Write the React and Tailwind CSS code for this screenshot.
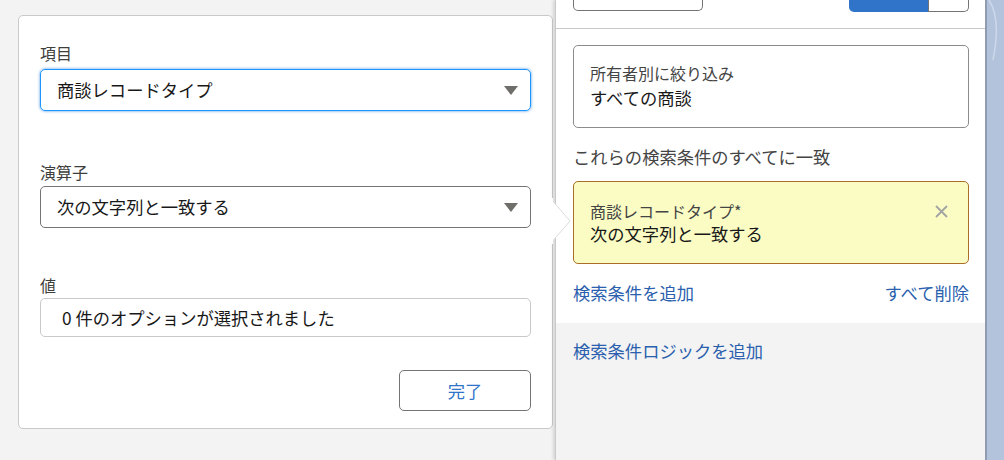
import React from "react"

const font = { fontFamily: '"Noto Sans CJK JP", "Noto Sans", sans-serif' }

function Caret() {
    return (
        <svg width="14" height="9" viewBox="0 0 14 9" className="shrink-0">
            <polygon points="0,0 14,0 7,9" fill="#706e6b" />
        </svg>
    )
}

function FilterEditor() {
    return (
        <div className="w-[535px] h-[414px] shrink-0 bg-white border border-[#c9c9c9] rounded-[5px] pt-[27px] px-[21px] flex flex-col">
            {/* 項目 */}
            <div className="h-[20px] leading-[20px] text-[16px] text-[#3e3e3c]">項目</div>
            <div className="mt-[6px] h-[42px] flex items-center justify-between pl-[16px] pr-[12px] border border-[#1b96ff] rounded-[5px] shadow-[0_0_3px_#4a90e2]">
                <span className="text-[17.3px] text-[#181818]">商談レコードタイプ</span>
                <Caret />
            </div>
            {/* 演算子 */}
            <div className="mt-[51px] h-[20px] leading-[20px] text-[16px] text-[#3e3e3c]">演算子</div>
            <div className="mt-[4px] h-[42px] flex items-center justify-between pl-[16px] pr-[12px] border border-[#747474] rounded-[5px]">
                <span className="text-[17.3px] text-[#181818]">次の文字列と一致する</span>
                <Caret />
            </div>
            {/* 値 */}
            <div className="mt-[47px] h-[20px] leading-[20px] text-[16px] text-[#3e3e3c]">値</div>
            <div className="mt-[3px] h-[39px] flex items-center pl-[21px] border border-[#c9c9c9] rounded-[5px]">
                <span className="text-[17.3px] text-[#181818]">0 件のオプションが選択されました</span>
            </div>
            <div className="mt-[33px] flex justify-end">
                <button className="w-[132px] h-[41px] border border-[#747474] rounded-[5px] text-[17.3px] text-[#2f74c9] bg-white">
                    完了
                </button>
            </div>
        </div>
    )
}

function FilterPanel() {
    return (
        <div className="w-[430px] shrink-0 h-full flex flex-col bg-[#f3f3f3] border-l border-[#c9c9c9] shadow-[-2px_0_3px_rgba(0,0,0,0.12)]">
            <div className="bg-white">
                {/* top buttons (cut off) */}
                <div className="h-[29px] border-b border-[#c9c9c9] pl-[17px] pr-[16px] flex justify-between items-start">
                    <div className="w-[130px] h-[11px] border border-t-0 border-[#747474] rounded-b-[5px]" />
                    <div className="flex">
                        <div className="w-[79px] h-[12px] bg-[#3074c9] rounded-bl-[5px]" />
                        <div className="w-[41px] h-[12px] border border-t-0 border-[#747474] rounded-br-[5px]" />
                    </div>
                </div>
                <div className="pl-[17px] pr-[16px] pt-[16px] pb-[18px] flex flex-col">
                    <div className="h-[83px] border border-[#8c8c8c] rounded-[5px] pl-[16px] pt-[17px]">
                        <div className="h-[20px] leading-[20px] text-[16px] text-[#444444]">所有者別に絞り込み</div>
                        <div className="mt-[3px] h-[24px] leading-[24px] text-[17.3px] text-[#181818]">すべての商談</div>
                    </div>
                    <div className="mt-[17px] h-[24px] leading-[24px] text-[17.3px] text-[#444444]">
                        これらの検索条件のすべてに一致
                    </div>
                    <div className="mt-[12px] h-[83px] bg-[#fafcc4] border border-[#a96e28] rounded-[5px] pl-[16px] pr-[20px] pt-[19px] flex justify-between items-start">
                        <div>
                            <div className="h-[20px] leading-[20px] text-[16px] text-[#444444]">商談レコードタイプ*</div>
                            <div className="mt-[1px] h-[24px] leading-[24px] text-[17.3px] text-[#181818]">次の文字列と一致する</div>
                        </div>
                        <svg width="13" height="13" viewBox="0 0 13 13" className="mt-[4px]">
                            <path d="M1 1 L12 12 M12 1 L1 12" stroke="#a3a3a3" strokeWidth="1.8" />
                        </svg>
                    </div>
                    <div className="mt-[17px] h-[24px] leading-[24px] flex justify-between text-[17.3px] text-[#2a60ad]">
                        <span>検索条件を追加</span>
                        <span>すべて削除</span>
                    </div>
                </div>
            </div>
            <div className="pl-[17px] pt-[16px] h-[24px] leading-[24px] text-[17.3px] text-[#2a60ad] box-content">
                検索条件ロジックを追加
            </div>
        </div>
    )
}

export default function App() {
    return (
        <div className="relative w-[1004px] h-[460px] overflow-hidden bg-[#f3f3f3] flex" style={font}>
            <div className="pl-[18px] pt-[15px] pr-[2px]">
                <FilterEditor />
            </div>
            <FilterPanel />
            {/* background strip on the right */}
            <div className="flex-1 h-full bg-[#b3c3dc] border-l-2 border-[#8f9bb0] relative overflow-hidden">
                <svg width="19" height="80" viewBox="0 0 19 80" className="absolute top-0 left-0">
                    <path d="M2 0 C10 12 12 30 6 60" stroke="#cdd8ea" strokeWidth="1.5" fill="none" />
                </svg>
            </div>
            {/* popover nub */}
            <svg width="22" height="46" viewBox="0 0 22 46" className="absolute left-[551px] top-[198px]">
                <polygon points="0,1 19,23 0,45" fill="#ffffff" stroke="#dcdcdc" strokeWidth="1" />
                <rect x="0" y="0" width="2" height="46" fill="#ffffff" />
            </svg>
        </div>
    )
}
